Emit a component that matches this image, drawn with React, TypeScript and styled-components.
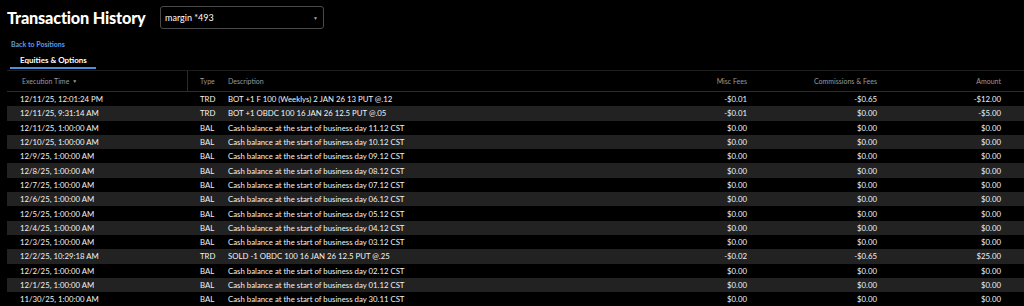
import React from 'react';
import styled, { createGlobalStyle } from 'styled-components';

const rows = [
    { time: '12/11/25, 12:01:24 PM', type: 'TRD', desc: 'BOT +1 F 100 (Weeklys) 2 JAN 26 13 PUT @.12', misc: '-$0.01', comm: '-$0.65', amount: '-$12.00' },
    { time: '12/11/25, 9:31:14 AM', type: 'TRD', desc: 'BOT +1 OBDC 100 16 JAN 26 12.5 PUT @.05', misc: '-$0.01', comm: '$0.00', amount: '-$5.00' },
    { time: '12/11/25, 1:00:00 AM', type: 'BAL', desc: 'Cash balance at the start of business day 11.12 CST' },
    { time: '12/10/25, 1:00:00 AM', type: 'BAL', desc: 'Cash balance at the start of business day 10.12 CST' },
    { time: '12/9/25, 1:00:00 AM', type: 'BAL', desc: 'Cash balance at the start of business day 09.12 CST' },
    { time: '12/8/25, 1:00:00 AM', type: 'BAL', desc: 'Cash balance at the start of business day 08.12 CST' },
    { time: '12/7/25, 1:00:00 AM', type: 'BAL', desc: 'Cash balance at the start of business day 07.12 CST' },
    { time: '12/6/25, 1:00:00 AM', type: 'BAL', desc: 'Cash balance at the start of business day 06.12 CST' },
    { time: '12/5/25, 1:00:00 AM', type: 'BAL', desc: 'Cash balance at the start of business day 05.12 CST' },
    { time: '12/4/25, 1:00:00 AM', type: 'BAL', desc: 'Cash balance at the start of business day 04.12 CST' },
    { time: '12/3/25, 1:00:00 AM', type: 'BAL', desc: 'Cash balance at the start of business day 03.12 CST' },
    { time: '12/2/25, 10:29:18 AM', type: 'TRD', desc: 'SOLD -1 OBDC 100 16 JAN 26 12.5 PUT @.25', misc: '-$0.02', comm: '-$0.65', amount: '$25.00' },
    { time: '12/2/25, 1:00:00 AM', type: 'BAL', desc: 'Cash balance at the start of business day 02.12 CST' },
    { time: '12/1/25, 1:00:00 AM', type: 'BAL', desc: 'Cash balance at the start of business day 01.12 CST' },
    { time: '11/30/25, 1:00:00 AM', type: 'BAL', desc: 'Cash balance at the start of business day 30.11 CST' },
];

const GlobalStyle = createGlobalStyle`
    html, body {
        margin: 0;
        background: #000;
        overflow: hidden;
    }
    body {
        font-family: Lato, "Open Sans", sans-serif;
        color: #eee;
    }
`;

const Page = styled.div`
    display: flex;
    flex-direction: column;
    width: 1024px;
    height: 306px;
    overflow: hidden;
`;

const TopBar = styled.div`
    display: flex;
    align-items: center;
    gap: 15px;
    padding: 6px 0 0 7px;
    height: 23px;
`;

const Title = styled.h1`
    margin: 0;
    width: 138px;
    font-size: 16.3px;
    font-weight: 900;
    color: #fff;
    letter-spacing: -0.2px;
    white-space: nowrap;
`;

const Select = styled.div`
    display: flex;
    align-items: center;
    justify-content: space-between;
    box-sizing: border-box;
    width: 164px;
    height: 23px;
    padding: 0 5px 0 4px;
    border: 1px solid #4a4a4a;
    border-radius: 3px;
    font-size: 9px;
    color: #fff;
`;

const Caret = styled.span`
    font-size: 5px;
    color: #aaa;
`;

const BackLink = styled.a`
    display: block;
    margin: 11px 0 0 11px;
    font-size: 7px;
    font-weight: 700;
    color: #5b9de6;
    line-height: 9px;
`;

const Tabs = styled.div`
    display: flex;
    margin: 7px 0 0 10px;
`;

const Tab = styled.div<{ active?: boolean }>`
    padding: 0 9px 2px 10px;
    font-size: 8px;
    font-weight: 700;
    color: #fff;
    line-height: 9px;
    border-bottom: 2px solid ${({ active }) => (active ? '#4d8fd9' : 'transparent')};
`;

const Table = styled.div`
    display: flex;
    flex-direction: column;
    margin: 1px 0 0 7px;
    border-top: 1px solid #1e1e1e;
`;

const Row = styled.div<{ striped?: boolean; head?: boolean }>`
    display: grid;
    grid-template-columns: 181px 40px 1fr 130px 130px 124px;
    padding-right: 23px;
    align-items: center;
    height: ${({ head }) => (head ? '20px' : '14.3px')};
    background: ${({ striped }) => (striped ? '#222' : '#000')};
    border-bottom: ${({ head }) => (head ? '1px solid #2c2c2c' : 'none')};
    font-size: ${({ head }) => (head ? '7px' : '7.8px')};
    color: ${({ head }) => (head ? '#9a9a9a' : '#f2f2f2')};
    white-space: nowrap;
`;

const Cell = styled.div<{ right?: boolean; first?: boolean; divider?: boolean; ruled?: boolean }>`
    height: 100%;
    display: flex;
    align-items: center;
    justify-content: ${({ right }) => (right ? 'flex-end' : 'flex-start')};
    padding-left: ${({ first, divider, ruled }) => (ruled ? '15px' : first ? '13px' : divider ? '12px' : '0')};
    border-right: ${({ ruled }) => (ruled ? '1px solid #2c2c2c' : 'none')};
    box-sizing: border-box;
`;

const SortArrow = styled.span`
    margin-left: 3px;
    font-size: 5px;
`;

const App: React.FC = () => {
    return (
        <Page>
            <GlobalStyle />
            <TopBar>
                <Title>Transaction History</Title>
                <Select>
                    margin *493
                    <Caret>▼</Caret>
                </Select>
            </TopBar>
            <BackLink>Back to Positions</BackLink>
            <Tabs>
                <Tab active>Equities &amp; Options</Tab>
            </Tabs>
            <Table>
                <Row head>
                    <Cell first ruled>
                        Execution Time<SortArrow>▼</SortArrow>
                    </Cell>
                    <Cell divider>Type</Cell>
                    <Cell>Description</Cell>
                    <Cell right>Misc Fees</Cell>
                    <Cell right>Commissions &amp; Fees</Cell>
                    <Cell right>Amount</Cell>
                </Row>
                {rows.map((r, i) => (
                    <Row key={i} striped={i % 2 === 1}>
                        <Cell first>{r.time}</Cell>
                        <Cell divider>{r.type}</Cell>
                        <Cell>{r.desc}</Cell>
                        <Cell right>{r.misc ?? '$0.00'}</Cell>
                        <Cell right>{r.comm ?? '$0.00'}</Cell>
                        <Cell right>{r.amount ?? '$0.00'}</Cell>
                    </Row>
                ))}
            </Table>
        </Page>
    );
};

export default App;
